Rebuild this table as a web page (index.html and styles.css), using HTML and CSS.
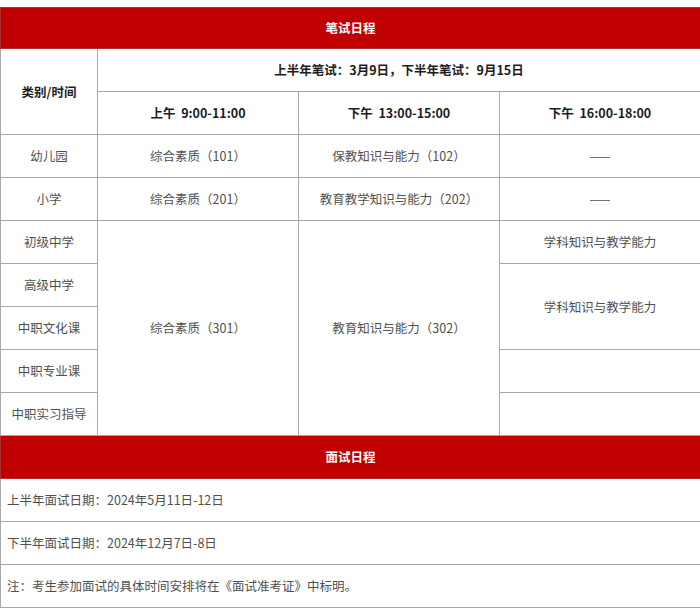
FILE: index.html
```html
<!DOCTYPE html>
<html lang="zh">
<head>
<meta charset="utf-8">
<title>笔试日程</title>
<link rel="stylesheet" href="styles.css">
</head>
<body>
<table class="schedule">
  <colgroup>
    <col class="c1"><col class="c2"><col class="c3"><col class="c4">
  </colgroup>
  <tr class="band band-top"><th colspan="4">笔试日程</th></tr>
  <tr class="head">
    <td rowspan="2">类别/时间</td>
    <td colspan="3">上半年笔试：3月9日，下半年笔试：9月15日</td>
  </tr>
  <tr class="head">
    <td>上午&nbsp;&nbsp;9:00-11:00</td>
    <td>下午&nbsp;&nbsp;13:00-15:00</td>
    <td>下午&nbsp;&nbsp;16:00-18:00</td>
  </tr>
  <tr>
    <td>幼儿园</td>
    <td>综合素质（101）</td>
    <td>保教知识与能力（102）</td>
    <td>——</td>
  </tr>
  <tr>
    <td>小学</td>
    <td>综合素质（201）</td>
    <td>教育教学知识与能力（202）</td>
    <td>——</td>
  </tr>
  <tr>
    <td>初级中学</td>
    <td rowspan="5">综合素质（301）</td>
    <td rowspan="5">教育知识与能力（302）</td>
    <td>学科知识与教学能力</td>
  </tr>
  <tr>
    <td>高级中学</td>
    <td rowspan="2">学科知识与教学能力</td>
  </tr>
  <tr>
    <td>中职文化课</td>
  </tr>
  <tr>
    <td>中职专业课</td>
    <td></td>
  </tr>
  <tr>
    <td>中职实习指导</td>
    <td></td>
  </tr>
  <tr class="band"><th colspan="4">面试日程</th></tr>
  <tr class="info"><td colspan="4">上半年面试日期：2024年5月11日-12日</td></tr>
  <tr class="info"><td colspan="4">下半年面试日期：2024年12月7日-8日</td></tr>
  <tr class="info"><td colspan="4">注：考生参加面试的具体时间安排将在《面试准考证》中标明。</td></tr>
</table>
</body>
</html>
```
FILE: styles.css
```css
html, body {
  margin: 0;
  padding: 0;
  background: #ffffff;
}
body {
  padding-top: 7px;
  font-family: "Noto Sans CJK SC", "Noto Sans", sans-serif;
  font-size: 12.5px;
  color: #505050;
}
.schedule {
  width: 700px;
  border-collapse: collapse;
  table-layout: fixed;
}
.c1 { width: 97px; }
.c2 { width: 201px; }
.c3 { width: 201px; }
.c4 { width: 201px; }
.schedule tr {
  height: 43px;
}
.schedule tr.band-top {
  height: 41px;
}
.schedule td,
.schedule th {
  border: 1px solid #a8a8a8;
  padding: 0;
  text-align: center;
  vertical-align: middle;
  line-height: 18px;
}
.band th {
  background: #c00000;
  color: #ffffff;
  font-weight: 700;
  border-color: #b03030;
}
.head td {
  font-weight: 700;
  color: #1c1c1c;
}
.info td {
  text-align: left;
  padding-left: 6px;
}
```
